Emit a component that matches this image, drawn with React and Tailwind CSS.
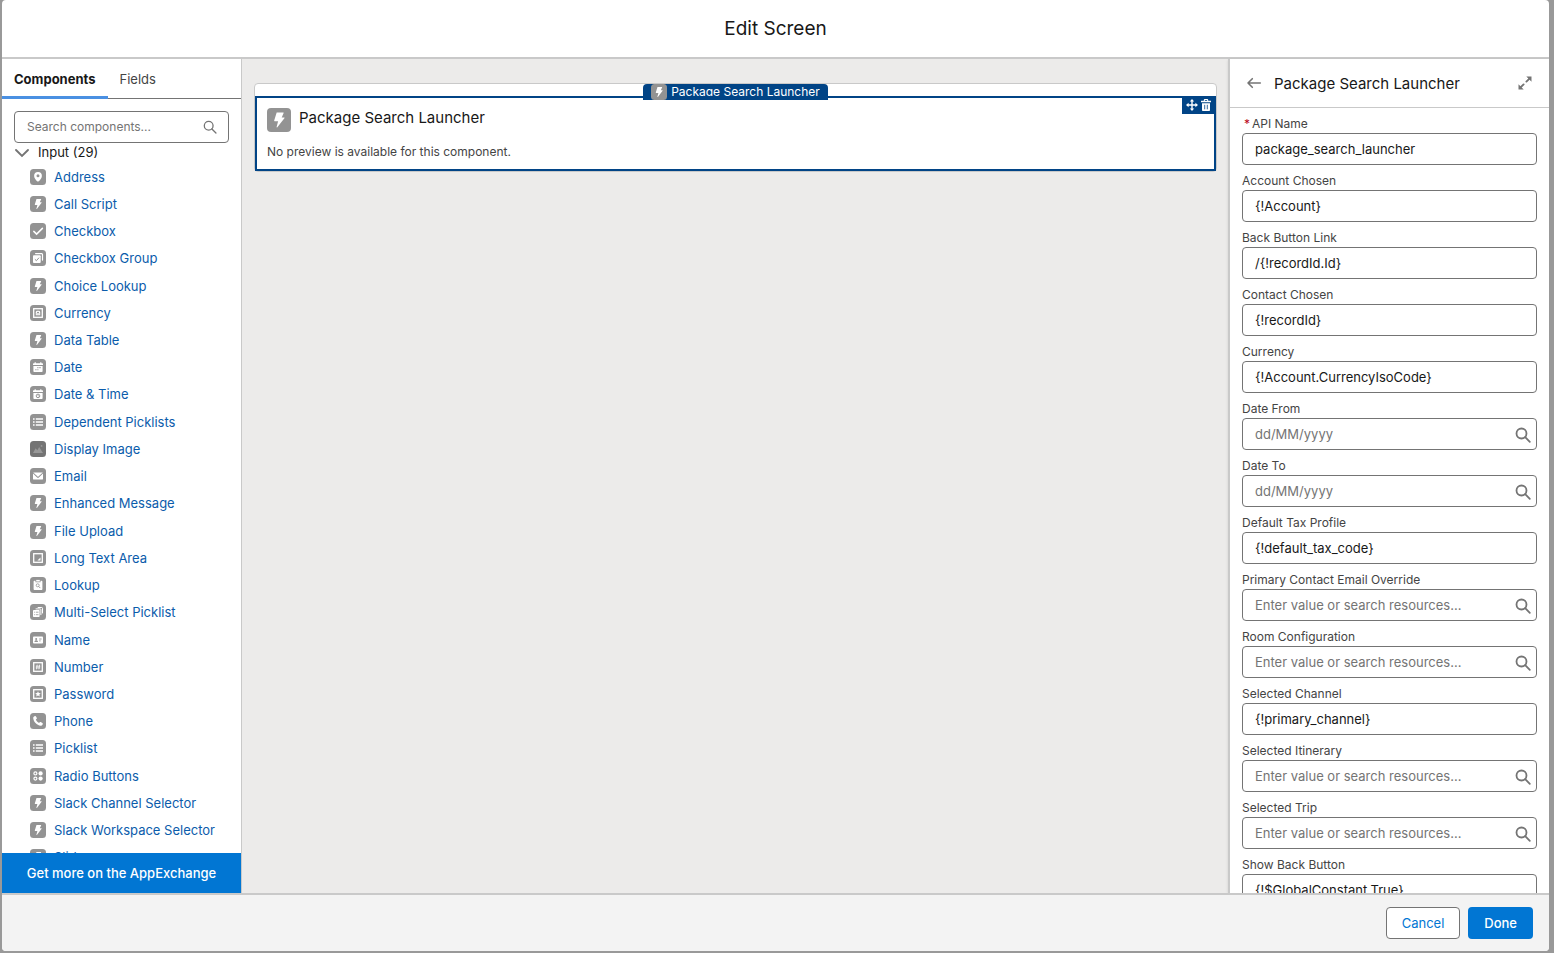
const frame = <rect x="3.7" y="3.7" width="8.6" height="8.6" fill="none" stroke="#fff" strokeWidth="1.3" />

const GLYPHS = {
  bolt: <path d="M6.7 3h4.2c.2 0 .3.2.2.4L9.8 6.3h1.6c.3 0 .4.3.2.5L6.9 12.9c-.2.3-.6.1-.5-.2l1-3.8H5.1c-.3 0-.4-.2-.3-.5l1.6-5.2c0-.1.1-.2.3-.2z" />,
  address: <path fillRule="evenodd" d="M8 3a3.9 3.9 0 0 0-3.9 3.9c0 2.3 2.3 4.6 3.5 5.7.2.2.5.2.7 0 1.3-1.1 3.6-3.4 3.6-5.7A3.9 3.9 0 0 0 8 3zm0 5.3a1.5 1.5 0 1 1 0-3 1.5 1.5 0 0 1 0 3z" />,
  check: <path d="M3.8 8.4l2.8 2.7 5.800-5.700" fill="none" stroke="#fff" strokeWidth="1.5" strokeLinecap="round" />,
  checkGroup: (
    <>
      <path d="M5.6 3.6h6c.5 0 .9.4.9.9v5.6" fill="none" stroke="#fff" strokeWidth="1.2" strokeLinecap="round" />
      <rect x="3" y="5.3" width="7.7" height="7.7" rx=".9" />
      <path d="M4.9 9.3l1.5 1.4 2.6-3" fill="none" stroke="#939393" strokeWidth="1" />
    </>
  ),
  currency: (
    <>
      {frame}
      <path d="M5.8 10.200V7.300c0-1 .6-1.500 1.500-1.500h1.400c.9 0 1.500.5 1.500 1.500v2.900z" />
      <path d="M6.300 8.900h3.400" stroke="#939393" strokeWidth=".5" />
      <path d="M6.900 7.900a1.100 1.100 0 0 1 2.200 0" fill="#939393" />
    </>
  ),
  date: (
    <>
      <path d="M3.6 4.3h1V3.2h1.2v1.1h4.4V3.2h1.2v1.1h1c.3 0 .6.3.6.7v1H3V5c0-.4.3-.7.6-.7z" />
      <path d="M3.4 6.9h9.2v5c0 .6-.4 1-1 1H4.4c-.6 0-1-.4-1-1z" />
      <path d="M7.4 8.6h1M9.4 8.6h1.2M5.3 10.8h1.2M7.4 10.8h1" stroke="#939393" strokeWidth="1.1" />
    </>
  ),
  dateTime: (
    <>
      <path d="M3.6 4.3h1V3.2h1.2v1.1h4.4V3.2h1.2v1.1h1c.3 0 .6.3.6.7v1H3V5c0-.4.3-.7.6-.7z" />
      <path d="M3.4 6.9h9.2v5c0 .6-.4 1-1 1H4.4c-.6 0-1-.4-1-1z" />
      <circle cx="8" cy="9.9" r="1.8" fill="none" stroke="#939393" strokeWidth="1" />
      <path d="M8 8.9v1.1h.8" fill="none" stroke="#939393" strokeWidth=".6" />
    </>
  ),
  list: <path d="M3 5.1h1.6M3 8h1.6M3 10.9h1.6M5.8 5.1H13M5.8 8H13M5.8 10.9H13" stroke="#fff" strokeWidth="1.5" />,
  image: (
    <>
      <path fill="#989898" d="M3 12l2.6-4.7 1.7 2L9.2 6l3.8 6z" />
      <circle cx="11.6" cy="4.9" r=".9" fill="#989898" />
    </>
  ),
  email: (
    <>
      <path d="M3.2 4.5h9.6L8.4 8.6a.6.6 0 0 1-.8 0z" />
      <path d="M3 5.5l4.1 4a1.3 1.3 0 0 0 1.8 0l4.1-4v5.2c0 .5-.4.9-.9.9H3.9a.9.9 0 0 1-.9-.9z" />
    </>
  ),
  textArea: (
    <>
      {frame}
      <path d="M10.500 7.400v3.100H7.400z" />
    </>
  ),
  lookup: (
    <>
      <path d="M6.2 2.9h3.6v1.6H6.2z" />
      <path d="M4.4 3.7h1.1v1.5h5V3.7h1.1c.4 0 .8.4.8.8v7.7c0 .5-.4.8-.8.8H4.4c-.4 0-.8-.3-.8-.8V4.5c0-.4.4-.8.8-.8z" />
      <circle cx="7.7" cy="8.3" r="1.5" fill="none" stroke="#939393" strokeWidth=".8" />
      <path d="M8.8 9.5l1.5 1.6" stroke="#939393" strokeWidth=".9" />
    </>
  ),
  multi: (
    <>
      <path d="M7.7 3.5h4.1c.4 0 .7.3.7.7v5.2" fill="none" stroke="#fff" strokeWidth="1" />
      <path d="M5.6 4.9h4.6c.4 0 .7.3.7.7v5.5" fill="none" stroke="#fff" strokeWidth="1" />
      <rect x="3" y="6" width="6.6" height="7" rx=".7" />
      <path d="M4.2 8.2h1M6 8.2h2.5M4.2 10.7h1M6 10.7h2.5" stroke="#939393" strokeWidth=".8" />
    </>
  ),
  name: (
    <>
      <rect x="3" y="4.5" width="10" height="7" rx=".9" />
      <circle cx="6.2" cy="7" r="1" fill="#939393" />
      <path d="M4.4 9.9c0-1.2.8-1.7 1.8-1.7s1.8.5 1.8 1.7z" fill="#939393" />
      <path d="M9.2 7h2.4M9.2 8.9h1.4" stroke="#939393" strokeWidth=".9" />
    </>
  ),
  number: (
    <>
      {frame}
      <path d="M7.2 5.700l-.7 4.600M9.6 5.700l-.7 4.600M5.800 7.200h4.500M5.700 8.900h4.500" stroke="#fff" strokeWidth=".8" />
    </>
  ),
  password: (
    <>
      {frame}
      <path d="M8 5.2l.8 1.9 2 .2-1.5 1.3.5 2L8 9.5l-1.8 1.1.5-2-1.5-1.3 2-.2z" />
    </>
  ),
  phone: <path d="M4 3.5l1-.5c.4-.2.8 0 1 .4l.8 1.6c.2.4.1.8-.3 1l-.7.5c.6 1.5 1.7 2.7 3.3 3.5l.6-.8c.3-.3.7-.4 1-.2l1.7.9c.4.2.5.6.4 1l-.5 1.1c-.3.6-.9.9-1.5.8C6.600 12.200 3.500 8.600 3.200 5c0-.6.2-1.2.8-1.5z" />,
  radio: (
    <>
      <circle cx="5.4" cy="5.4" r="1.5" fill="none" stroke="#fff" strokeWidth="1.2" />
      <circle cx="10.6" cy="5.4" r="2.100" />
      <circle cx="5.4" cy="10.6" r="1.5" fill="none" stroke="#fff" strokeWidth="1.2" />
      <circle cx="10.6" cy="10.6" r="2.100" />
    </>
  ),
}

const COMPONENTS = [
  ["Address", "address"],
  ["Call Script", "bolt"],
  ["Checkbox", "check"],
  ["Checkbox Group", "checkGroup"],
  ["Choice Lookup", "bolt"],
  ["Currency", "currency"],
  ["Data Table", "bolt"],
  ["Date", "date"],
  ["Date & Time", "dateTime"],
  ["Dependent Picklists", "list"],
  ["Display Image", "image"],
  ["Email", "email"],
  ["Enhanced Message", "bolt"],
  ["File Upload", "bolt"],
  ["Long Text Area", "textArea"],
  ["Lookup", "lookup"],
  ["Multi-Select Picklist", "multi"],
  ["Name", "name"],
  ["Number", "number"],
  ["Password", "password"],
  ["Phone", "phone"],
  ["Picklist", "list"],
  ["Radio Buttons", "radio"],
  ["Slack Channel Selector", "bolt"],
  ["Slack Workspace Selector", "bolt"],
  ["Slider", "bolt"],
]

const RESOURCE = "Enter value or search resources..."

const FIELDS = [
  { label: "API Name", value: "package_search_launcher", required: true },
  { label: "Account Chosen", value: "{!Account}" },
  { label: "Back Button Link", value: "/{!recordId.Id}" },
  { label: "Contact Chosen", value: "{!recordId}" },
  { label: "Currency", value: "{!Account.CurrencyIsoCode}" },
  { label: "Date From", placeholder: "dd/MM/yyyy" },
  { label: "Date To", placeholder: "dd/MM/yyyy" },
  { label: "Default Tax Profile", value: "{!default_tax_code}" },
  { label: "Primary Contact Email Override", placeholder: RESOURCE },
  { label: "Room Configuration", placeholder: RESOURCE },
  { label: "Selected Channel", value: "{!primary_channel}" },
  { label: "Selected Itinerary", placeholder: RESOURCE },
  { label: "Selected Trip", placeholder: RESOURCE },
  { label: "Show Back Button", value: "{!$GlobalConstant.True}" },
]

function ComponentIcon({ name, className = "size-4" }) {
  return (
    <svg viewBox="0 0 16 16" className={`shrink-0 ${className}`} fill="#fff" aria-hidden="true">
      <rect width="16" height="16" rx={className === "size-4" ? 3.5 : 2.7} fill={name === "image" ? "#747474" : "#939393"} />
      {GLYPHS[name]}
    </svg>
  )
}

function SearchIcon({ className, strokeWidth = 1.5 }) {
  return (
    <svg viewBox="0 0 16 16" className={className} fill="none" stroke="#747474" strokeWidth={strokeWidth} aria-hidden="true">
      <circle cx="6.5" cy="6.5" r="5" />
      <path d="M10.2 10.2l4.6 4.6" strokeLinecap="round" />
    </svg>
  )
}

function Sidebar() {
  return (
    <aside className="flex w-60 shrink-0 flex-col border-r border-[#c9c9c9] bg-white">
      <div role="tablist" className="flex h-10 shrink-0 border-b border-[#747474] text-[13px]">
        <button role="tab" aria-selected="true" className="-mb-px h-10 border-b-3 border-[#4a90e2] px-3 pt-1 font-bold text-[#181818]">
          Components
        </button>
        <button role="tab" aria-selected="false" className="px-3 pt-0.5 text-[#444444]">
          Fields
        </button>
      </div>
      <div className="relative mx-3 mt-3 shrink-0">
        <input
          type="search"
          aria-label="Search components"
          placeholder="Search components..."
          className="block h-8 w-full rounded border border-[#747474] bg-white pr-9 pb-0.5 pl-3 text-[12px] text-[#181818] placeholder:text-[#747474]"
        />
        <SearchIcon className="absolute top-2 right-[11px] size-4 p-px" />
      </div>
      <div className="min-h-0 flex-1 overflow-hidden">
        <button className="flex h-5 items-start gap-2 pl-3 text-[13px] leading-[18px] text-[#181818]">
          <svg viewBox="0 0 16 16" className="mt-0.5 size-4" fill="none" stroke="#747474" strokeWidth="1.9" aria-hidden="true">
            <path d="M2 5l6 6 6-6" strokeLinecap="round" />
          </svg>
          Input (29)
        </button>
        <ul className="grid h-[708px] auto-rows-fr pl-7">
          {COMPONENTS.map(([label, icon]) => (
            <li key={label} className="flex items-center gap-2 text-[13px] leading-5">
              <ComponentIcon name={icon} />
              <a href="#" className="text-[#0b5cab]">
                {label}
              </a>
            </li>
          ))}
        </ul>
      </div>
      <button className="h-10 shrink-0 bg-[#0176d3] pt-0.5 text-[13px] font-medium text-white">Get more on the AppExchange</button>
    </aside>
  )
}

function Canvas() {
  return (
    <main className="min-w-0 flex-1 bg-[#ecebea] pt-6 pr-[11px] pl-3">
      <div className="relative rounded border border-[#c9c9c9] bg-white pt-3">
        <section className="relative border-2 border-[#014486] px-2.5 pt-2.5 pb-[7px]">
          <div className="flex items-start gap-2">
            <ComponentIcon name="bolt" className="size-6" />
            <h2 className="text-[15px] leading-5 text-[#181818]">Package Search Launcher</h2>
          </div>
          <p className="mt-2.5 text-[12px] leading-5 text-[#444444]">No preview is available for this component.</p>
          <div className="absolute -top-0.5 -right-0.5 flex h-[18px] items-center gap-0.5 bg-[#014486] px-1">
            <button aria-label="Move">
              <svg viewBox="0 0 12 12" className="size-3" fill="#fff" aria-hidden="true">
                <path d="M6 0l2.2 2.6H6.7v2.7h2.7V3.8L12 6 9.4 8.2V6.7H6.7v2.7h1.5L6 12 3.8 9.4h1.5V6.7H2.6v1.5L0 6l2.6-2.2v1.5h2.7V2.6H3.8z" />
              </svg>
            </button>
            <button aria-label="Delete">
              <svg viewBox="0 0 12 12" className="size-3" aria-hidden="true">
                <path fill="#fff" d="M1 1.8h2.8V1c0-.5.4-.9.9-.9h2.6c.5 0 .9.4.9.9v.8H11v1.5H1zM2 4.2h8v6.7c0 .6-.5 1.1-1.1 1.1H3.1C2.5 12 2 11.5 2 10.9z" />
                <path stroke="#014486" strokeWidth=".8" d="M4.9 1.5h2.2M4.7 5.8v4.5M7.3 5.8v4.5" />
              </svg>
            </button>
          </div>
        </section>
        <div className="absolute inset-x-0 top-0 flex justify-center">
          <div className="h-4 overflow-hidden rounded-t bg-[#014486] px-2">
            <div className="flex h-3 items-start gap-1 text-[12px] leading-4 text-white">
              <ComponentIcon name="bolt" />
              <span className="h-3 overflow-hidden">Package Search Launcher</span>
            </div>
          </div>
        </div>
      </div>
    </main>
  )
}

function Field({ label, value, placeholder, required }) {
  const id = label.toLowerCase().replaceAll(" ", "-")
  return (
    <div className="shrink-0">
      <label htmlFor={id} className="block text-[12px] leading-[18px] text-[#444444]">
        {required && <abbr title="required" className="mx-0.5 text-[#ba0517] no-underline">*</abbr>}
        {label}
      </label>
      <div className="relative">
        <input
          id={id}
          type="text"
          defaultValue={value}
          placeholder={placeholder}
          className="block h-8 w-full rounded border border-[#747474] bg-white px-3 text-[13px] text-[#181818] placeholder:text-[#747474]"
        />
        {placeholder && <SearchIcon strokeWidth={1.8} className="absolute top-[9px] right-1.5 size-4" />}
      </div>
    </div>
  )
}

function PropertyPanel() {
  return (
    <aside className="flex w-[321px] shrink-0 flex-col border-l-2 border-[#c9c9c9] bg-white shadow">
      <header className="flex h-[49px] shrink-0 items-center border-b border-[#c9c9c9] px-4">
        <button aria-label="Back">
          <svg viewBox="0 0 16 16" className="size-4" fill="none" stroke="#747474" strokeWidth="1.6" strokeLinecap="round" strokeLinejoin="round" aria-hidden="true">
            <path d="M14.3 8H2M6.3 3.700L2 8l4.300 4.300" />
          </svg>
        </button>
        <h2 className="ml-3 flex-1 pt-0.5 text-[15px] leading-6 text-[#181818]">Package Search Launcher</h2>
        <button aria-label="Expand">
          <svg viewBox="0 0 16 16" className="size-4" fill="#747474" stroke="#747474" aria-hidden="true">
            <path d="M9.3 1.500h5.200v5.200zM1.500 9.300v5.200h5.200z" stroke="none" />
            <path d="M9.400 6.600l3.300-3.300M6.600 9.400l-3.300 3.300" strokeWidth="1.9" strokeLinecap="round" />
          </svg>
        </button>
      </header>
      <form className="flex min-h-0 flex-1 flex-col gap-[7px] overflow-hidden px-3 pt-[7px]">
        {FIELDS.map((field) => (
          <Field key={field.label} {...field} />
        ))}
      </form>
    </aside>
  )
}

export default function App() {
  return (
    <div className="h-screen bg-[#999999] pr-[5px] pb-0.5 pl-0.5 font-['Inter',sans-serif]">
      <div className="flex h-full flex-col overflow-hidden rounded bg-white">
        <header className="flex h-[59px] shrink-0 items-center justify-center border-b-2 border-[#c9c9c9]">
          <h1 className="text-[19px] leading-7 text-[#181818]">Edit Screen</h1>
        </header>
        <div className="flex min-h-0 flex-1">
          <Sidebar />
          <Canvas />
          <PropertyPanel />
        </div>
        <footer className="flex shrink-0 justify-end gap-2 border-t-2 border-[#c9c9c9] bg-[#f3f3f3] px-4 py-3 text-[13px]">
          <button className="h-8 rounded border border-[#747474] bg-white px-[15px] pt-0.5 text-[#0176d3]">Cancel</button>
          <button className="h-8 rounded bg-[#0176d3] px-4 pt-0.5 font-medium text-white">Done</button>
        </footer>
      </div>
    </div>
  )
}
